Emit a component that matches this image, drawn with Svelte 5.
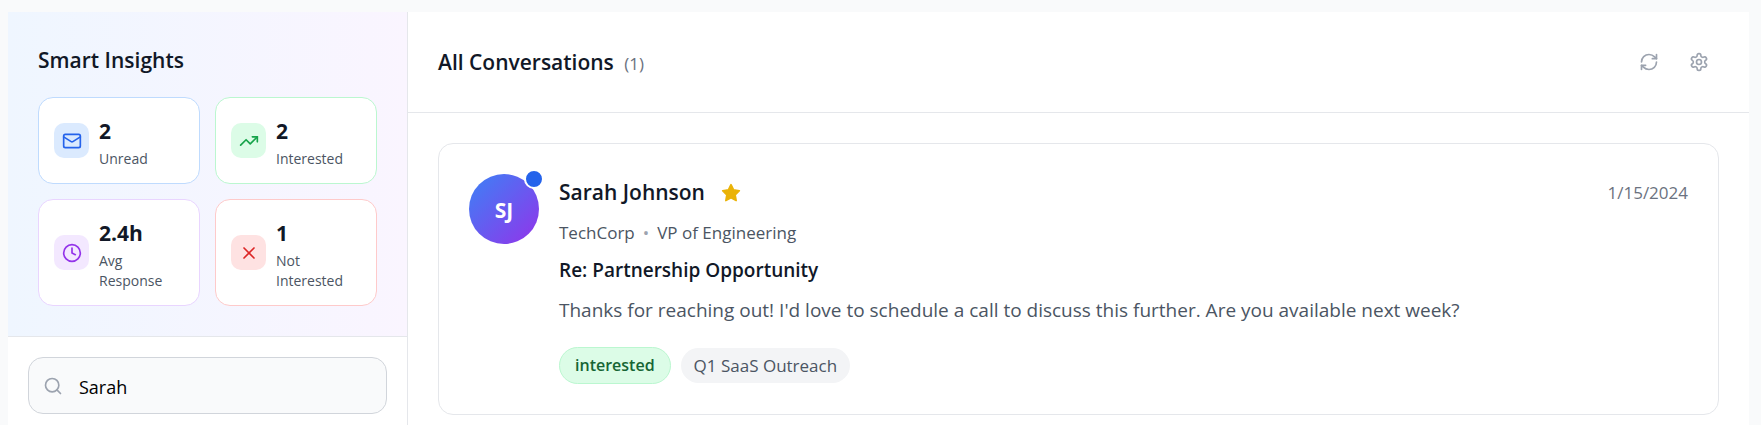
<script lang="ts">
  interface Insight {
    key: string;
    value: string;
    label: string;
    tone: string;
  }

  interface Conversation {
    id: number;
    name: string;
    initials: string;
    company: string;
    role: string;
    subject: string;
    preview: string;
    status: string;
    campaign: string;
    date: string;
    unread: boolean;
    starred: boolean;
  }

  const insights: Insight[] = [
    { key: 'unread', value: '2', label: 'Unread', tone: 'blue' },
    { key: 'interested', value: '2', label: 'Interested', tone: 'green' },
    { key: 'response', value: '2.4h', label: 'Avg Response', tone: 'purple' },
    { key: 'not-interested', value: '1', label: 'Not Interested', tone: 'red' }
  ];

  let conversations = $state<Conversation[]>([
    {
      id: 1,
      name: 'Sarah Johnson',
      initials: 'SJ',
      company: 'TechCorp',
      role: 'VP of Engineering',
      subject: 'Re: Partnership Opportunity',
      preview:
        "Thanks for reaching out! I'd love to schedule a call to discuss this further. Are you available next week?",
      status: 'interested',
      campaign: 'Q1 SaaS Outreach',
      date: '1/15/2024',
      unread: true,
      starred: true
    }
  ]);

  let search = $state('Sarah');

  let filtered = $derived(
    conversations.filter((c) =>
      `${c.name} ${c.company} ${c.subject}`.toLowerCase().includes(search.toLowerCase())
    )
  );
</script>

<div class="inbox">
  <aside class="sidebar">
    <section class="insights">
      <h2>Smart Insights</h2>
      <div class="insight-grid">
        {#each insights as item (item.key)}
          <div class="insight {item.tone}">
            <div class="insight-icon">
              <svg viewBox="0 0 24 24" class="icon" aria-hidden="true">
                {#if item.key === 'unread'}
                  <rect width="20" height="16" x="2" y="4" rx="2" />
                  <path d="m22 7-8.97 5.7a1.94 1.94 0 0 1-2.06 0L2 7" />
                {:else if item.key === 'interested'}
                  <polyline points="22 7 13.5 15.5 8.5 10.5 2 17" />
                  <polyline points="16 7 22 7 22 13" />
                {:else if item.key === 'response'}
                  <circle cx="12" cy="12" r="10" />
                  <polyline points="12 6 12 12 16 14" />
                {:else}
                  <path d="M18 6 6 18" />
                  <path d="m6 6 12 12" />
                {/if}
              </svg>
            </div>
            <div>
              <div class="value">{item.value}</div>
              <div class="label">{item.label}</div>
            </div>
          </div>
        {/each}
      </div>
    </section>

    <div class="search">
      <label class="search-box">
        <svg viewBox="0 0 24 24" class="icon" aria-hidden="true">
          <circle cx="11" cy="11" r="8" />
          <path d="m21 21-4.3-4.3" />
        </svg>
        <input type="text" bind:value={search} aria-label="Search conversations" />
      </label>
    </div>
  </aside>

  <main>
    <header>
      <h2>All Conversations <span class="count">({filtered.length})</span></h2>
      <div class="actions">
        <button class="icon-button" aria-label="Refresh">
          <svg viewBox="0 0 24 24" class="icon" aria-hidden="true">
            <path d="M3 12a9 9 0 0 1 9-9 9.75 9.75 0 0 1 6.74 2.74L21 8" />
            <path d="M21 3v5h-5" />
            <path d="M21 12a9 9 0 0 1-9 9 9.75 9.75 0 0 1-6.74-2.74L3 16" />
            <path d="M8 16H3v5" />
          </svg>
        </button>
        <button class="icon-button" aria-label="Settings">
          <svg viewBox="0 0 24 24" class="icon" aria-hidden="true">
            <path
              d="M12.22 2h-.44a2 2 0 0 0-2 2v.18a2 2 0 0 1-1 1.73l-.43.25a2 2 0 0 1-2 0l-.15-.08a2 2 0 0 0-2.73.73l-.22.38a2 2 0 0 0 .73 2.73l.15.1a2 2 0 0 1 1 1.72v.51a2 2 0 0 1-1 1.74l-.15.09a2 2 0 0 0-.73 2.73l.22.38a2 2 0 0 0 2.73.73l.15-.08a2 2 0 0 1 2 0l.43.25a2 2 0 0 1 1 1.73V20a2 2 0 0 0 2 2h.44a2 2 0 0 0 2-2v-.18a2 2 0 0 1 1-1.73l.43-.25a2 2 0 0 1 2 0l.15.08a2 2 0 0 0 2.73-.73l.22-.39a2 2 0 0 0-.73-2.73l-.15-.08a2 2 0 0 1-1-1.74v-.5a2 2 0 0 1 1-1.74l.15-.09a2 2 0 0 0 .73-2.73l-.22-.38a2 2 0 0 0-2.73-.73l-.15.08a2 2 0 0 1-2 0l-.43-.25a2 2 0 0 1-1-1.73V4a2 2 0 0 0-2-2z"
            />
            <circle cx="12" cy="12" r="3" />
          </svg>
        </button>
      </div>
    </header>

    <div class="list">
      {#each filtered as conversation (conversation.id)}
        <article class="conversation">
          <div class="avatar">
            {conversation.initials}
            {#if conversation.unread}
              <span class="unread-dot"></span>
            {/if}
          </div>
          <div class="body">
            <div class="top-row">
              <h3>{conversation.name}</h3>
              {#if conversation.starred}
                <svg viewBox="0 0 24 24" class="icon star" aria-hidden="true">
                  <polygon
                    points="12 2 15.09 8.26 22 9.27 17 14.14 18.18 21.02 12 17.77 5.82 21.02 7 14.14 2 9.27 8.91 8.26 12 2"
                  />
                </svg>
              {/if}
              <time>{conversation.date}</time>
            </div>
            <div class="meta">
              <span>{conversation.company}</span>
              <span class="dot">•</span>
              <span>{conversation.role}</span>
            </div>
            <h4>{conversation.subject}</h4>
            <p>{conversation.preview}</p>
            <div class="tags">
              <span class="tag status">{conversation.status}</span>
              <span class="tag campaign">{conversation.campaign}</span>
            </div>
          </div>
        </article>
      {/each}
    </div>
  </main>
</div>

<style>
  :global(body) {
    background: #f9fafb;
    font-family: 'Open Sans', 'Noto Sans', sans-serif;
    color: #111827;
  }

  .inbox,
  .inbox * {
    box-sizing: border-box;
  }

  .inbox {
    display: flex;
    margin: 12px 12px 0 8px;
    background: white;
  }

  h2,
  h3,
  h4,
  p {
    margin: 0;
  }

  h2,
  h3 {
    font-size: 21px;
    line-height: 37px;
    font-weight: 600;
  }

  .icon {
    display: block;
    flex: none;
    width: 20px;
    height: 20px;
    fill: none;
    stroke: currentColor;
    stroke-width: 2;
    stroke-linecap: round;
    stroke-linejoin: round;
  }

  /* Sidebar */
  .sidebar {
    flex: none;
    width: 400px;
    border-right: 1px solid #e5e7eb;
  }

  .insights {
    padding: 30px;
    background: linear-gradient(to right, #eff6ff, #faf5ff);
    border-bottom: 1px solid #e5e7eb;
  }

  .insight-grid {
    display: grid;
    grid-template-columns: 1fr 1fr;
    gap: 15px;
    margin-top: 18px;
  }

  .insight {
    display: flex;
    align-items: center;
    gap: 10px;
    padding: 14px 15px;
    background: white;
    border: 1px solid;
    border-radius: 15px;
  }

  .insight-icon {
    display: grid;
    place-items: center;
    flex: none;
    width: 35px;
    height: 35px;
    border-radius: 10px;
  }

  .blue {
    border-color: #bfdbfe;
  }

  .blue .insight-icon {
    background: #dbeafe;
    color: #2563eb;
  }

  .green {
    border-color: #bbf7d0;
  }

  .green .insight-icon {
    background: #dcfce7;
    color: #16a34a;
  }

  .purple {
    border-color: #e9d5ff;
  }

  .purple .insight-icon {
    background: #f3e8ff;
    color: #9333ea;
  }

  .red {
    border-color: #fecaca;
  }

  .red .insight-icon {
    background: #fee2e2;
    color: #dc2626;
  }

  .value {
    padding-top: 2px;
    font-size: 21px;
    line-height: 35px;
    font-weight: 700;
  }

  .label {
    font-size: 14px;
    line-height: 20px;
    color: #4b5563;
  }

  .search {
    padding: 20px;
  }

  .search-box {
    display: flex;
    align-items: center;
    gap: 16px;
    height: 57px;
    padding: 0 14px;
    background: #f9fafb;
    border: 1px solid #d1d5db;
    border-radius: 15px;
    color: #9ca3af;
  }

  .search-box input {
    flex: 1;
    min-width: 0;
    padding: 2px 0 0;
    border: 0;
    outline: 0;
    background: none;
    color: black;
    font: inherit;
    font-size: 18px;
  }

  /* Conversation list */
  main {
    flex: 1;
    min-width: 0;
  }

  header {
    display: flex;
    align-items: flex-end;
    justify-content: space-between;
    padding: 30px;
    border-bottom: 1px solid #e5e7eb;
  }

  .count {
    margin-left: 5px;
    font-size: 17px;
    font-weight: 400;
    color: #6b7280;
  }

  .actions {
    display: flex;
    gap: 10px;
  }

  .icon-button {
    padding: 10px;
    border: 0;
    border-radius: 10px;
    background: none;
    color: #9ca3af;
    cursor: pointer;
  }

  .icon-button:hover {
    background: #f3f4f6;
  }

  .list {
    padding: 30px;
  }

  .conversation {
    display: flex;
    align-items: flex-start;
    gap: 20px;
    padding: 30px;
    border: 1px solid #e5e7eb;
    border-radius: 15px;
  }

  .avatar {
    position: relative;
    display: grid;
    place-items: center;
    flex: none;
    width: 70px;
    height: 70px;
    padding-top: 2px;
    border-radius: 50%;
    background: linear-gradient(to bottom right, #3b82f6, #9333ea);
    color: white;
    font-size: 21px;
    font-weight: 700;
  }

  .unread-dot {
    position: absolute;
    top: -5px;
    right: -5px;
    width: 20px;
    height: 20px;
    border: 2px solid white;
    border-radius: 50%;
    background: #2563eb;
  }

  .body {
    flex: 1;
    min-width: 0;
  }

  .top-row {
    display: flex;
    align-items: center;
    gap: 16px;
  }

  .star {
    fill: #eab308;
    color: #eab308;
  }

  time {
    margin-left: auto;
    font-size: 17px;
    color: #6b7280;
  }

  .meta {
    display: flex;
    gap: 8px;
    margin-top: 9px;
    font-size: 17px;
    line-height: 25px;
    color: #4b5563;
  }

  .dot {
    color: #9ca3af;
  }

  h4 {
    margin-top: 10px;
    font-size: 19px;
    line-height: 30px;
    font-weight: 600;
  }

  p {
    margin-top: 10px;
    font-size: 19px;
    line-height: 30px;
    color: #4b5563;
  }

  .tags {
    display: flex;
    align-items: center;
    gap: 10px;
    margin-top: 22px;
  }

  .tag {
    padding: 5px 15px;
    border-radius: 20px;
    font-size: 16px;
    line-height: 25px;
  }

  .status {
    border: 1px solid #bbf7d0;
    background: #dcfce7;
    color: #166534;
    font-weight: 600;
  }

  .campaign {
    padding: 5px 13px;
    background: #f3f4f6;
    color: #4b5563;
    font-size: 17px;
  }
</style>
